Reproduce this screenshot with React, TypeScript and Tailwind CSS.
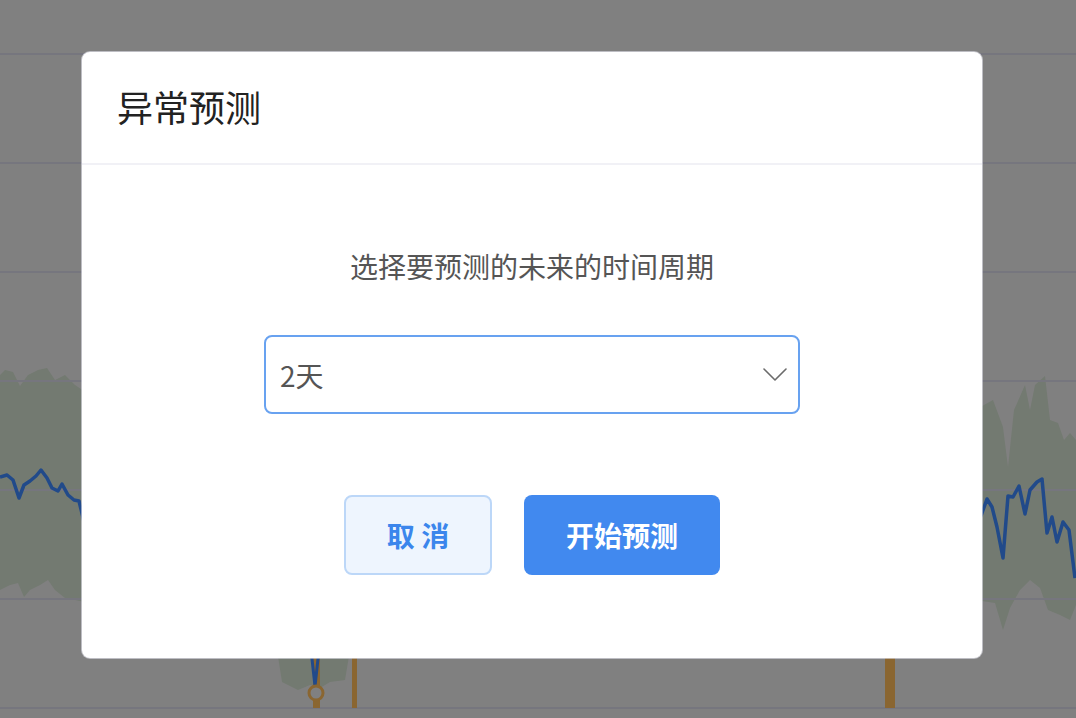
import React, { useState } from "react";

const GRID_Y = [54, 163, 272, 381, 490, 599, 708];

const leftBand =
  "0,375 5,370 13,372 20,386 28,375 38,370 47,368 55,380 65,375 75,385 90,395 90,603 75,600 65,598 55,590 48,580 40,585 30,590 24,597 18,583 10,585 0,590";
const leftLine =
  "0,477 7,475 13,480 19,498 24,485 30,481 36,476 41,470 47,478 52,488 58,491 62,484 68,495 74,500 79,501 86,530";
const rightBand =
  "975,410 993,400 1003,427 1008,467 1014,410 1025,385 1030,410 1035,385 1045,376 1050,420 1058,423 1064,440 1070,433 1076,440 1076,605 1070,620 1060,615 1048,610 1040,588 1030,580 1020,590 1010,608 1003,630 995,603 975,600";
const rightLine =
  "975,530 982,513 987,499 992,507 997,527 1003,558 1008,496 1013,497 1019,486 1025,514 1030,490 1037,482 1042,479 1047,533 1052,517 1057,542 1063,522 1069,530 1075,578";

const BackgroundChart: React.FC = () => (
  <svg width="1076" height="718" viewBox="0 0 1076 718" className="block">
    <rect width="1076" height="718" fill="#808080" />
    <polygon points={leftBand} fill="#737a71" />
    <polygon points={rightBand} fill="#737a71" />
    <polygon points="277,650 282,682 298,690 310,685 320,688 330,682 345,680 350,650" fill="#737a71" />
    {GRID_Y.map((y) => (
      <line key={y} x1="0" x2="1076" y1={y} y2={y} stroke="#76767e" strokeWidth="2" />
    ))}
    <polyline points={leftLine} fill="none" stroke="#214a8a" strokeWidth="3.5" strokeLinejoin="round" />
    <polyline points={rightLine} fill="none" stroke="#214a8a" strokeWidth="3.5" strokeLinejoin="round" />
    <rect x="313" y="650" width="7" height="58" fill="#8a6631" />
    <rect x="352" y="650" width="5" height="58" fill="#8a6631" />
    <rect x="885" y="650" width="10" height="58" fill="#8a6631" />
    <polyline points="311,650 315,686 319,650" fill="none" stroke="#214a8a" strokeWidth="3" />
    <circle cx="316" cy="693" r="7" fill="#808080" stroke="#8a6631" strokeWidth="3" />
  </svg>
);

const ChevronDown: React.FC = () => (
  <svg width="24" height="13" viewBox="0 0 24 13" fill="none">
    <path d="M1 1L12 12L23 1" stroke="#6b6b6b" strokeWidth="1.6" strokeLinecap="round" strokeLinejoin="round" />
  </svg>
);

export default function App() {
  const [period, setPeriod] = useState("2天");

  return (
    <div
      className="relative w-[1076px] h-[718px] overflow-hidden"
      style={{ fontFamily: '"Noto Sans CJK SC", "Noto Sans", sans-serif' }}
    >
      <BackgroundChart />

      {/* Modal */}
      <div className="absolute inset-0 flex items-start pl-[82px] pt-[52px]">
        <div className="w-[900px] h-[606px] bg-white rounded-lg shadow-[0_0_0_1px_rgba(230,230,240,0.6)] flex flex-col">
          <div className="h-[113px] flex items-center pl-[35px] border-b-2 border-[#f1f1f6]">
            <h2 className="text-[36px] leading-none text-[#222] font-normal -mt-[4px]">异常预测</h2>
          </div>

          <div className="flex flex-col items-center pt-[83px]">
            <p className="text-[28px] leading-[36px] text-[#555]">选择要预测的未来的时间周期</p>

            <div className="mt-[51px] w-[536px] h-[79px] rounded-lg border-2 border-[#68a2f0] flex items-center justify-between pl-[14px] pr-[11px] cursor-pointer">
              <span className="text-[28px] text-[#555] leading-none">{period}</span>
              <ChevronDown />
            </div>

            <div className="mt-[81px] flex gap-8">
              <button
                className="w-[148px] h-[80px] rounded-lg border-2 border-[#bcd7f8] bg-[#eef5fe] text-[#3b86ec] text-[28px] font-bold"
                onClick={() => setPeriod("2天")}
              >
                取 消
              </button>
              <button className="w-[196px] h-[80px] rounded-lg bg-[#4189ef] text-white text-[28px] font-bold">
                开始预测
              </button>
            </div>
          </div>
        </div>
      </div>
    </div>
  );
}
